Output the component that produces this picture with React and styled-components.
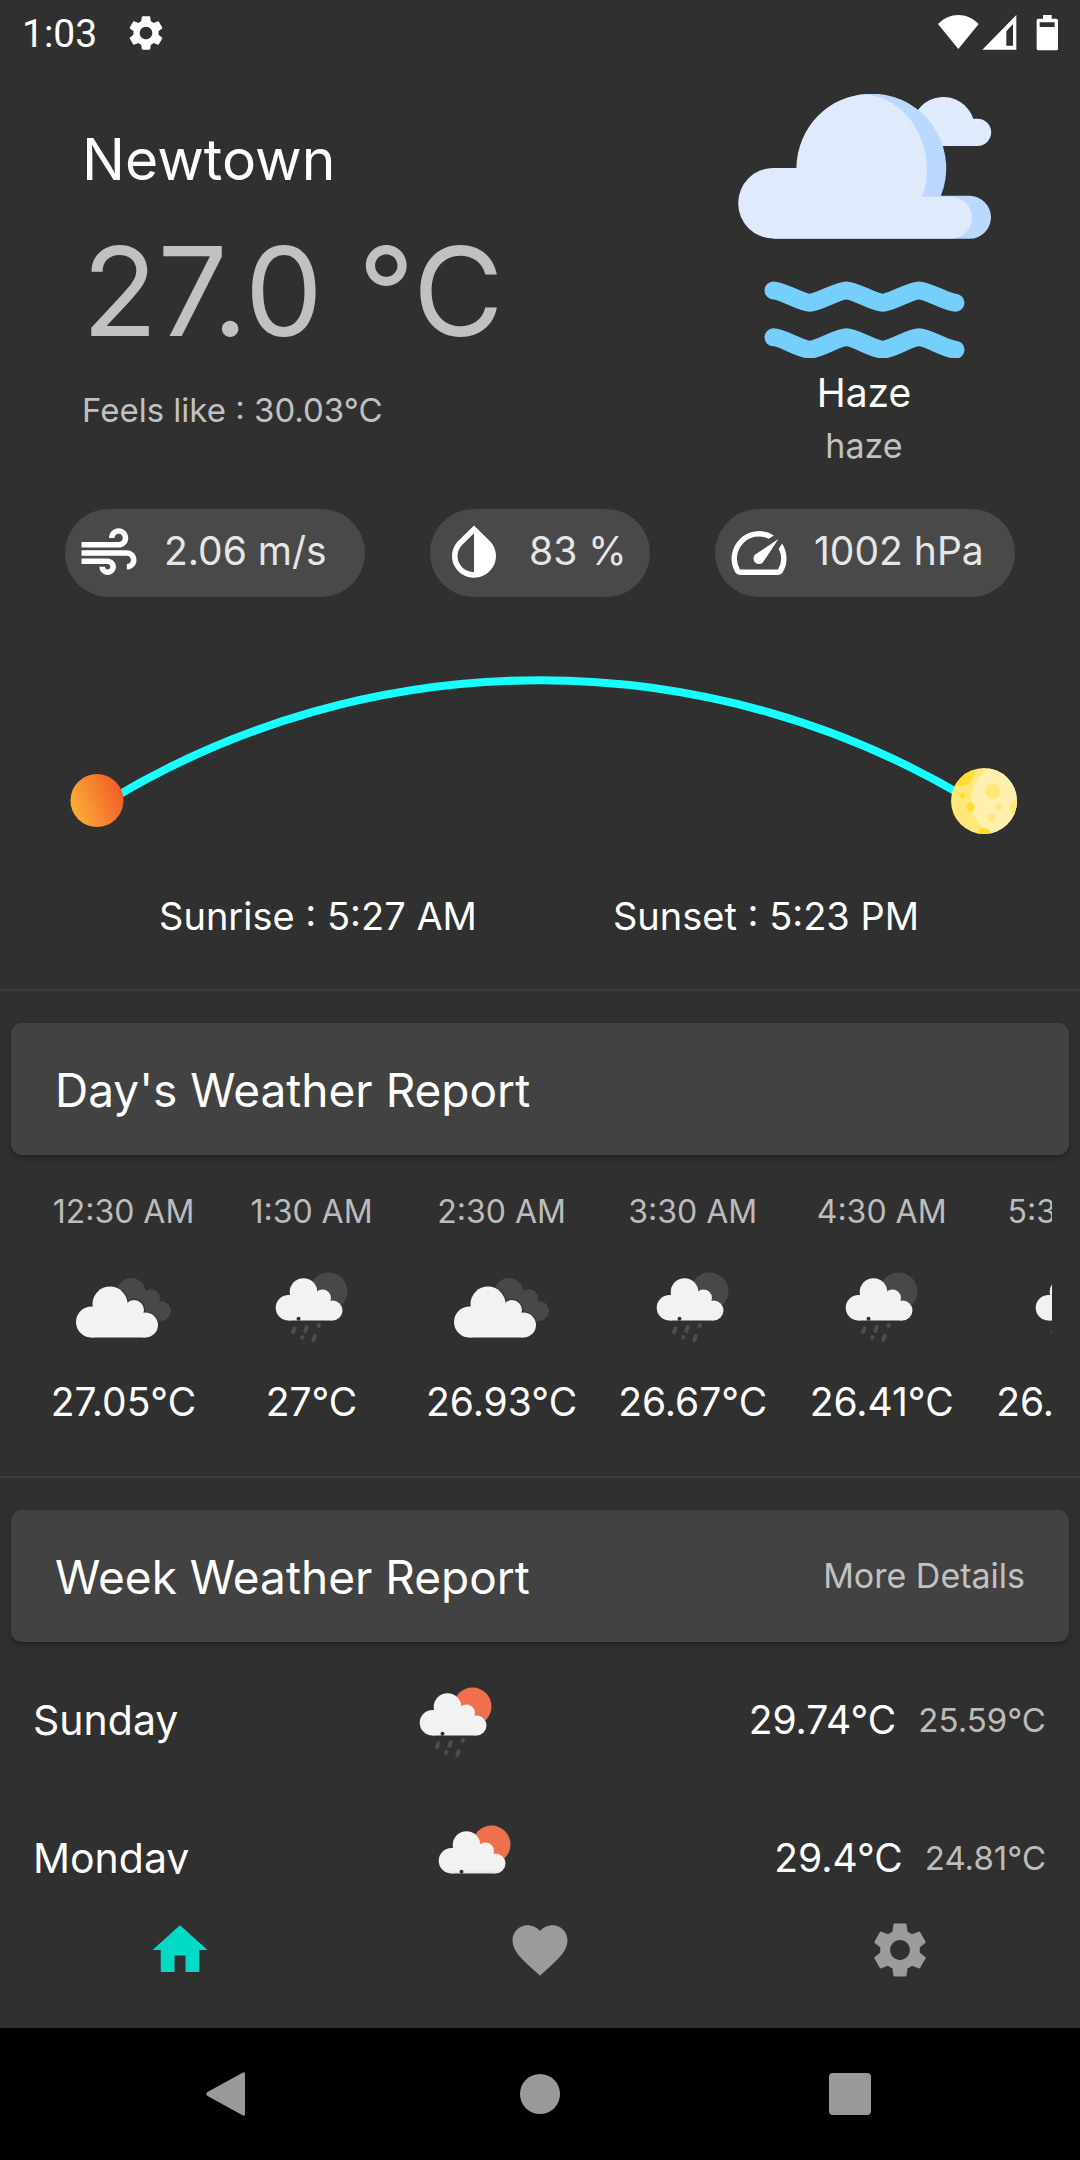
import React from "react";
import styled, { createGlobalStyle } from "styled-components";
import { MdAir, MdHome, MdFavorite, MdSettings } from "react-icons/md";

const GlobalStyle = createGlobalStyle`
  *, *::before, *::after { box-sizing: border-box; }
  body {
    margin: 0;
    background: #303030;
    color: #ffffff;
    font-family: Inter, "Open Sans", sans-serif;
  }
  button { font: inherit; color: inherit; background: none; border: 0; padding: 0; cursor: pointer; }
  h1, h2, p, ul { margin: 0; padding: 0; font-weight: 400; }
  ul { list-style: none; }
  svg { display: block; flex: none; }
`;

const Screen = styled.div`
  display: flex;
  flex-direction: column;
  height: 100vh;
  overflow: hidden;
`;

const StatusBar = styled.header`
  display: flex;
  align-items: center;
  flex: none;
  height: 66px;
  padding: 0 22px;
  font-family: Roboto, sans-serif;
`;

const Clock = styled.time`
  font-size: 39px;
  line-height: 64px;
  margin-right: 28px;
  padding-top: 2px;
`;

const StatusIcons = styled.div`
  display: flex;
  margin-left: auto;
`;

const Content = styled.main`
  flex: 1;
  min-height: 0;
  overflow: hidden;
`;

const Current = styled.section`
  display: flex;
  justify-content: space-between;
  margin-bottom: 45px;
`;

const Readings = styled.div`
  padding: 54px 0 0 82px;
`;

const City = styled.h1`
  font-size: 57px;
  line-height: 80px;
`;

const Temperature = styled.p`
  font-size: 124px;
  line-height: 182px;
  color: #c1c1c1;
  white-space: nowrap;
`;

const FeelsLike = styled.p`
  font-size: 33px;
  line-height: 56px;
  color: #c1c1c1;
`;

const Condition = styled.div`
  display: flex;
  flex-direction: column;
  align-items: center;
  width: 40%;
  padding-top: 28px;
`;

const ConditionName = styled.p`
  font-size: 39px;
  line-height: 70px;
`;

const ConditionNote = styled.p`
  font-size: 34px;
  line-height: 36px;
  color: #c1c1c1;
`;

const Chips = styled.ul`
  display: flex;
  justify-content: space-evenly;
  margin-bottom: 78px;
`;

const Chip = styled.li`
  display: flex;
  align-items: center;
  gap: 22px;
  width: ${(p) => p.$width}px;
  height: 88px;
  padding-left: 11px;
  border-radius: 44px;
  background: #494949;
`;

const ChipLabel = styled.span`
  font-size: 39px;
  line-height: 60px;
  color: #e6e6e6;
  white-space: nowrap;
  padding-bottom: 4px;
`;

const SunPath = styled.svg`
  width: 100%;
  height: auto;
`;

const SunTimes = styled.div`
  display: flex;
  padding: 51px 90px 43px 94px;
`;

const SunTime = styled.p`
  flex: 1;
  text-align: center;
  font-size: 38px;
  line-height: 60px;
  white-space: nowrap;
`;

const Divider = styled.hr`
  height: 2px;
  margin: 0 0 32px;
  border: 0;
  background: #3c3c3c;
`;

const TitleCard = styled.div`
  display: flex;
  align-items: center;
  justify-content: space-between;
  height: 132px;
  margin: 0 11px;
  padding: 0 44px;
  border-radius: 11px;
  background: #424242;
  box-shadow: 0 3px 5px rgba(0, 0, 0, 0.3);
`;

const Title = styled.h2`
  font-size: 46px;
  line-height: 66px;
  padding-top: 2px;
`;

const DetailsButton = styled.button`
  font-size: 34px;
  line-height: 54px;
  color: #c1c1c1;
`;

const Hours = styled.ul`
  display: flex;
  gap: 41px;
  margin: 0 28px;
  padding: 30px 22px 44px;
  overflow: hidden;
`;

const Hour = styled.li`
  display: flex;
  flex: none;
  flex-direction: column;
  align-items: center;
  min-width: 147px;
`;

const HourTime = styled.span`
  font-size: 32px;
  line-height: 54px;
  margin-bottom: 14px;
  color: #bcbcbc;
`;

const HourTemp = styled.span`
  font-size: 39px;
  line-height: 60px;
  margin-top: 9px;
`;

const Days = styled.ul`
  padding: 12px 34px 0 33px;
`;

const Day = styled.li`
  display: flex;
  align-items: center;
  justify-content: space-between;
  height: 138px;
`;

const DayName = styled.span`
  font-size: 41px;
  line-height: 60px;
  padding-bottom: 6px;
`;

const DayRange = styled.span`
  display: flex;
  align-items: center;
  gap: 22px;
  padding: 0 0 6px 14px;
`;

const High = styled.span`
  font-size: 39px;
  line-height: 60px;
`;

const Low = styled.span`
  font-size: 33px;
  line-height: 60px;
  color: #bcbcbc;
`;

const TabBar = styled.nav`
  display: flex;
  flex: none;
  height: 154px;
  padding-bottom: 2px;
  background: #303030;
  box-shadow: 0 0 5px rgba(0, 0, 0, 0.15);
  z-index: 1;
`;

const Tab = styled.button`
  display: flex;
  flex: 1;
  align-items: center;
  justify-content: center;
  color: ${(p) => (p.$active ? "#03dac6" : "#9c9c9c")};
`;

const SystemBar = styled.nav`
  display: flex;
  flex: none;
  height: 132px;
  padding: 0 75px;
  background: #000000;
  z-index: 1;
`;

const SystemKey = styled.button`
  display: flex;
  flex: 1;
  align-items: center;
  justify-content: center;
`;

function HazeArt() {
  const wave =
    "C249 871 306 908 332 908 S416 871 442 871 S525 908 551 908 S634 871 660 871 S744 908 770 908";
  return (
    <svg width="255" height="264" viewBox="114 281 765 793" aria-hidden="true">
      <path d="M640 375 A94 94 0 0 1 823 355 H836 A41 41 0 0 1 836 437 H700 Z" fill="#dfebfd" />
      <path
        d="M223 503 H294 A224 224 0 1 1 726 587 H812 A64 64 0 0 1 812 716 H223 Z"
        fill="#bbd8ff"
      />
      <path
        d="M223 503 H292 C294 380 392 281 507 283 C608 296 684 392 684 505 C684 535 679 565 670 590 H757 A62 62 0 0 1 757 715 H223 A106 106 0 0 1 223 503 Z"
        fill="#dfebfd"
      />
      <g fill="none" stroke="#76cffb" strokeWidth="54" strokeLinecap="round" strokeLinejoin="round">
        <path d={"M223 871 " + wave} />
        <path d={"M223 871 " + wave} transform="translate(0 141)" />
      </g>
    </svg>
  );
}

function BrokenClouds() {
  const front = (
    <>
      <circle cx="22.500" cy="69" r="15.500" />
      <circle cx="41" cy="51" r="17.500" />
      <circle cx="65" cy="57" r="10" />
      <circle cx="76.500" cy="72" r="12.500" />
      <path d="M22.500 84.500 V54 H24 L60 50 L74 62 L76.500 84.500 Z" />
    </>
  );
  return (
    <svg width="110" height="110" viewBox="0 0 110 110" aria-hidden="true">
      <g fill="#48484a">
        <circle cx="62" cy="39.500" r="14.500" />
        <circle cx="82" cy="45" r="9" />
        <circle cx="92" cy="58" r="10" />
        <path d="M50 42 H88 L92 68 H60 Z" />
      </g>
      <g fill="#303030" stroke="#303030" strokeWidth="2">{front}</g>
      <g fill="#f2f2f0">{front}</g>
    </svg>
  );
}

function Showers({ disc }) {
  return (
    <svg width="110" height="110" viewBox="0 0 110 110" aria-hidden="true">
      <circle cx="71.500" cy="38.500" r="19" fill={disc} />
      <g fill="#f2f2f2">
        <circle cx="31.500" cy="54.700" r="12.800" />
        <circle cx="46.500" cy="39" r="13.800" />
        <circle cx="65.500" cy="45" r="8.500" />
        <circle cx="75.500" cy="57.500" r="10" />
        <path d="M31.500 67.500 V42 H34 L60 40 L73.500 49 L75.500 67.500 Z" />
      </g>
      <circle cx="41.500" cy="65.800" r="2" fill="#303030" />
      <g stroke="#4d4d4d" strokeWidth="4" strokeLinecap="round">
        <path d="M37.500 75.300 L36 79.300" />
        <path d="M49.800 74 L48.300 78" />
        <path d="M61.900 72 L61.500 72.800" />
        <path d="M45.400 84.200 L45.200 84.600" />
        <path d="M57.800 83 L56.300 87" />
      </g>
    </svg>
  );
}

const NIGHT = "#48484a";
const DAY = "#ef704d";

const hours = [
  { time: "12:30 AM", temp: "27.05°C", icon: <BrokenClouds /> },
  { time: "1:30 AM", temp: "27°C", icon: <Showers disc={NIGHT} /> },
  { time: "2:30 AM", temp: "26.93°C", icon: <BrokenClouds /> },
  { time: "3:30 AM", temp: "26.67°C", icon: <Showers disc={NIGHT} /> },
  { time: "4:30 AM", temp: "26.41°C", icon: <Showers disc={NIGHT} /> },
  { time: "5:30 AM", temp: "26.22°C", icon: <Showers disc={NIGHT} /> },
];

const days = [
  { name: "Sunday", high: "29.74°C", low: "25.59°C" },
  { name: "Monday", high: "29.4°C", low: "24.81°C" },
];

export default function App() {
  return (
    <Screen>
      <GlobalStyle />
      <StatusBar>
        <Clock>1:03</Clock>
        <MdSettings size={42} aria-hidden="true" />
        <StatusIcons>
          <svg width="120" height="36" viewBox="715 46 360 108" fill="#ffffff" aria-hidden="true">
            <path d="M715 73 C750 37 802 37 837 73 L776 148 Z" />
            <path d="M848 150 L950 46 V150 Z M920 95 V138 H940 V73 Z" fillRule="evenodd" />
            <path
              d="M1030 46 H1056 V57 H1070 Q1075 57 1075 62 V147 Q1075 152 1070 152 H1016 Q1011 152 1011 147 V62 Q1011 57 1016 57 H1030 Z M1020 68 V82 H1065 V68 Z"
              fillRule="evenodd"
            />
          </svg>
        </StatusIcons>
      </StatusBar>

      <Content>
        <Current>
          <Readings>
            <City>Newtown</City>
            <Temperature>27.0 °C</Temperature>
            <FeelsLike>Feels like : 30.03°C</FeelsLike>
          </Readings>
          <Condition>
            <HazeArt />
            <ConditionName>Haze</ConditionName>
            <ConditionNote>haze</ConditionNote>
          </Condition>
        </Current>

        <Chips>
          <Chip $width={300}>
            <MdAir size={66} aria-hidden="true" />
            <ChipLabel>2.06 m/s</ChipLabel>
          </Chip>
          <Chip $width={220}>
            <svg width="66" height="66" viewBox="0 0 24 24" fill="#ffffff" aria-hidden="true">
              <path d="M12 4.810V19c-3.310 0-6-2.630-6-5.870 0-1.560.62-3.030 1.750-4.140L12 4.810M6.350 7.560C4.900 8.990 4 10.960 4 13.130 4 17.480 7.580 21 12 21s8-3.520 8-7.870c0-2.170-.9-4.140-2.350-5.570L12 2 6.350 7.560z" />
            </svg>
            <ChipLabel>83 %</ChipLabel>
          </Chip>
          <Chip $width={300}>
            <svg width="66" height="66" viewBox="0 0 24 24" fill="#ffffff" aria-hidden="true">
              <path d="M20.380 8.570l-1.230 1.850a8 8 0 0 1-.22 7.580H5.070A8 8 0 0 1 15.580 6.850l1.850-1.230A10 10 0 0 0 3.350 19a2 2 0 0 0 1.720 1h13.850a2 2 0 0 0 1.740-1 10 10 0 0 0-.27-10.440zm-9.790 6.840a2 2 0 0 0 2.830 0l5.660-8.490-8.490 5.660a2 2 0 0 0 0 2.830z" />
            </svg>
            <ChipLabel>1002 hPa</ChipLabel>
          </Chip>
        </Chips>

        <SunPath viewBox="0 675 1080 160" aria-hidden="true">
          <defs>
            <linearGradient id="sun" x1="0" y1="0.700" x2="1" y2="0.300">
              <stop offset="0" stopColor="#fbb03b" />
              <stop offset="1" stopColor="#f15a24" />
            </linearGradient>
            <clipPath id="moon">
              <circle cx="984" cy="801" r="33" />
            </clipPath>
          </defs>
          <path d="M110 800 A832 832 0 0 1 970 800" fill="none" stroke="#18ffff" strokeWidth="8" />
          <circle cx="97" cy="800.500" r="26.500" fill="url(#sun)" />
          <g clipPath="url(#moon)">
            <rect x="951" y="768" width="66" height="66" fill="#ffe779" />
            <circle cx="1009" cy="800" r="38" fill="#fff0ae" />
            <circle cx="961" cy="773" r="13" fill="#ffde2f" />
            <circle cx="962.500" cy="795.500" r="2.700" fill="#ffde2f" />
            <circle cx="970.500" cy="807" r="4.400" fill="#ffde2f" />
            <circle cx="984" cy="835" r="7" fill="#ffde2f" />
            <circle cx="993" cy="791.500" r="7.700" fill="#ffe779" />
            <circle cx="999" cy="807" r="3" fill="#ffe779" />
            <circle cx="991.500" cy="817.500" r="4" fill="#ffe779" />
            <circle cx="1017" cy="808" r="8" fill="#ffe779" />
          </g>
        </SunPath>

        <SunTimes>
          <SunTime>Sunrise : 5:27 AM</SunTime>
          <SunTime>Sunset : 5:23 PM</SunTime>
        </SunTimes>

        <Divider />
        <TitleCard>
          <Title>Day's Weather Report</Title>
        </TitleCard>
        <Hours>
          {hours.map((h) => (
            <Hour key={h.time}>
              <HourTime>{h.time}</HourTime>
              {h.icon}
              <HourTemp>{h.temp}</HourTemp>
            </Hour>
          ))}
        </Hours>

        <Divider />
        <TitleCard>
          <Title>Week Weather Report</Title>
          <DetailsButton type="button">More Details</DetailsButton>
        </TitleCard>
        <Days>
          {days.map((d) => (
            <Day key={d.name}>
              <DayName>{d.name}</DayName>
              <Showers disc={DAY} />
              <DayRange>
                <High>{d.high}</High>
                <Low>{d.low}</Low>
              </DayRange>
            </Day>
          ))}
        </Days>
      </Content>

      <TabBar aria-label="Sections">
        <Tab type="button" aria-label="Home" $active>
          <MdHome size={66} />
        </Tab>
        <Tab type="button" aria-label="Favourites">
          <MdFavorite size={66} />
        </Tab>
        <Tab type="button" aria-label="Settings">
          <MdSettings size={66} />
        </Tab>
      </TabBar>

      <SystemBar aria-label="System">
        <SystemKey type="button" aria-label="Back">
          <svg width="48" height="48" viewBox="0 0 48 48" fill="#999999">
            <path d="M37 2.500 Q39 1.500 39 4 V44 Q39 46.500 37 45.500 L1.500 26 Q-1 24 1.500 22 Z" />
          </svg>
        </SystemKey>
        <SystemKey type="button" aria-label="Home screen">
          <svg width="42" height="42" viewBox="0 0 42 42" fill="#999999">
            <circle cx="21" cy="21" r="20" />
          </svg>
        </SystemKey>
        <SystemKey type="button" aria-label="Recent apps">
          <svg width="42" height="42" viewBox="0 0 42 42" fill="#999999">
            <rect width="42" height="42" rx="4" />
          </svg>
        </SystemKey>
      </SystemBar>
    </Screen>
  );
}
